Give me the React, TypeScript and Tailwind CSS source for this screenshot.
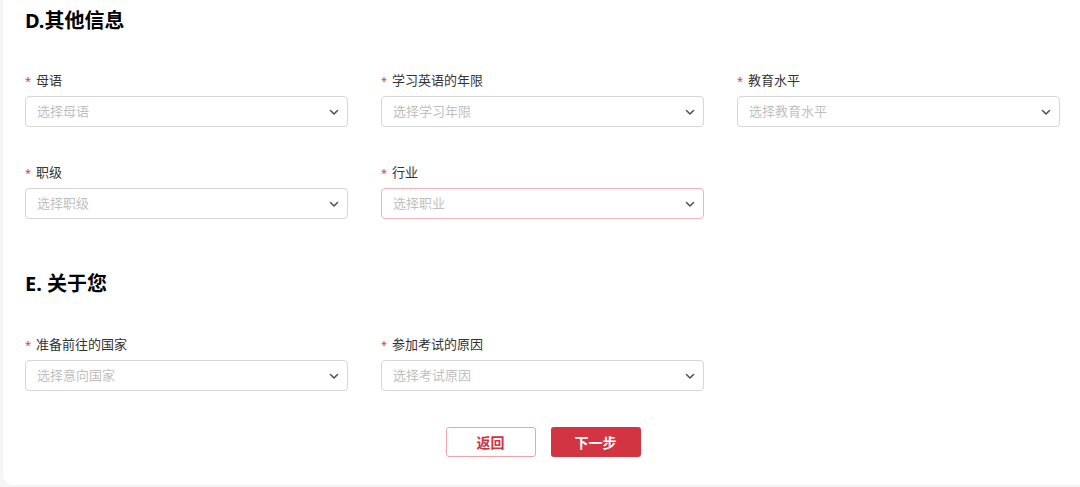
import React from 'react';

interface FieldProps {
    label: string;
    placeholder: string;
    highlight?: boolean;
}

const Chevron = () => (
    <svg width="12" height="12" viewBox="0 0 12 12" fill="none" className="shrink-0">
        <path d="M2.5 4.5 L6 8 L9.5 4.5" stroke="#555" strokeWidth="1.6" strokeLinecap="round" strokeLinejoin="round" />
    </svg>
);

const Field: React.FC<FieldProps> = ({ label, placeholder, highlight }) => (
    <div className="flex flex-col w-[323px]">
        <div className="h-[20px] flex items-center text-[13px] text-[#333] leading-[20px]">
            <span className="text-[#e03a45] mr-[5px] text-[11px] mt-[2px]">*</span>
            {label}
        </div>
        <div
            className={`mt-[6px] h-[31px] rounded-[4px] border flex items-center justify-between pl-[11px] pr-[7px] ${
                highlight ? 'border-[#efb3b8]' : 'border-[#d6d6d6]'
            }`}
        >
            <span className="text-[13px] text-[#bfbfbf]">{placeholder}</span>
            <Chevron />
        </div>
    </div>
);

const SectionTitle: React.FC<{ children: React.ReactNode }> = ({ children }) => (
    <h2 className="h-[30px] leading-[30px] text-[20px] font-bold text-black">{children}</h2>
);

export default function App() {
    return (
        <div
            className="h-[487px] w-[1080px] bg-[#f5f5f5] pl-[3px] flex overflow-hidden"
            style={{ fontFamily: '"Noto Sans", "Noto Sans CJK SC", sans-serif' }}
        >
            <div className="flex-1 h-[485px] bg-white rounded-bl-[10px] pl-[22px] pt-[6px]">
                <SectionTitle>D.其他信息</SectionTitle>

                <div className="mt-[34px] flex gap-[33px]">
                    <Field label="母语" placeholder="选择母语" />
                    <Field label="学习英语的年限" placeholder="选择学习年限" />
                    <Field label="教育水平" placeholder="选择教育水平" />
                </div>

                <div className="mt-[35px] flex gap-[33px]">
                    <Field label="职级" placeholder="选择职级" />
                    <Field label="行业" placeholder="选择职业" highlight />
                </div>

                <div className="mt-[50px]">
                    <SectionTitle>E. 关于您</SectionTitle>
                </div>

                <div className="mt-[35px] flex gap-[33px]">
                    <Field label="准备前往的国家" placeholder="选择意向国家" />
                    <Field label="参加考试的原因" placeholder="选择考试原因" />
                </div>

                <div className="mt-[36px] flex justify-center gap-[15px] pr-[19px]">
                    <button className="w-[90px] h-[30px] rounded-[3px] border border-[#f0a3aa] bg-white text-[#cf3340] text-[14px] font-bold">
                        返回
                    </button>
                    <button className="w-[90px] h-[30px] rounded-[3px] bg-[#d33442] text-white text-[14px] font-bold">
                        下一步
                    </button>
                </div>
            </div>
        </div>
    );
}
